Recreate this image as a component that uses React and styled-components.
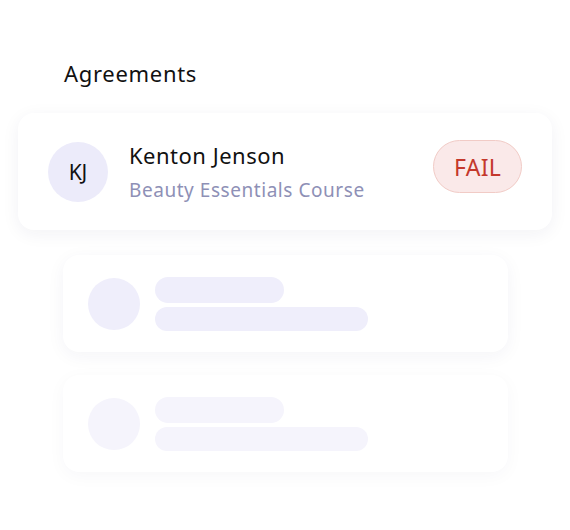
import React from 'react';
import styled, { createGlobalStyle } from 'styled-components';

const GlobalStyle = createGlobalStyle`
  body {
    margin: 0;
    background: #ffffff;
    font-family: 'Noto Sans', 'Open Sans', sans-serif;
  }
`;

const Page = styled.div`
  width: 570px;
  height: 530px;
  display: flex;
  flex-direction: column;
  align-items: center;
  padding-top: 57px;
  box-sizing: border-box;
`;

const Title = styled.h2`
  align-self: flex-start;
  margin: 0 0 24px 64px;
  font-size: 22px;
  font-weight: 400;
  letter-spacing: 0.7px;
  line-height: 32px;
  color: #111111;
`;

const Card = styled.div`
  display: flex;
  align-items: center;
  box-sizing: border-box;
  width: ${(p) => p.$width}px;
  height: ${(p) => p.$height}px;
  padding: 0 ${(p) => p.$pad}px;
  margin-bottom: ${(p) => p.$gap || 0}px;
  background: #ffffff;
  border-radius: 16px;
  box-shadow: 0 4px 18px rgba(40, 40, 90, ${(p) => p.$shadow});
`;

const Avatar = styled.div`
  flex: none;
  width: ${(p) => p.$size}px;
  height: ${(p) => p.$size}px;
  border-radius: 50%;
  background: ${(p) => p.$bg};
  display: flex;
  align-items: center;
  justify-content: center;
  font-size: 21px;
  color: #111111;
`;

const Info = styled.div`
  flex: 1;
  margin-left: 21px;
  display: flex;
  flex-direction: column;
  gap: 8px;
`;

const Name = styled.div`
  font-size: 22px;
  letter-spacing: 0.5px;
  line-height: 28px;
  color: #111111;
`;

const Course = styled.div`
  font-size: 19px;
  letter-spacing: 0.55px;
  line-height: 26px;
  color: #8e90b6;
`;

const Pill = styled.div`
  flex: none;
  align-self: flex-start;
  margin-top: 27px;
  width: 89px;
  height: 53px;
  box-sizing: border-box;
  border: 1.5px solid #f1cbc6;
  background: #fae9e9;
  border-radius: 27px;
  display: flex;
  align-items: center;
  justify-content: center;
  font-size: 23px;
  letter-spacing: 0.3px;
  color: #c4382c;
`;

const Lines = styled.div`
  margin-left: 15px;
  display: flex;
  flex-direction: column;
  gap: 4px;
`;

const Bar = styled.div`
  width: ${(p) => p.$w}px;
  height: ${(p) => p.$h}px;
  border-radius: 13px;
  background: ${(p) => p.$bg};
`;

const Skeleton = ({ tone, shadow, gap }) => (
  <Card $width={445} $height={97} $pad={25} $shadow={shadow} $gap={gap}>
    <Avatar $size={52} $bg={tone} />
    <Lines>
      <Bar $w={129} $h={26} $bg={tone} />
      <Bar $w={213} $h={24} $bg={tone} />
    </Lines>
  </Card>
);

export default function App() {
  return (
    <>
      <GlobalStyle />
      <Page>
        <Title>Agreements</Title>
        <Card $width={534} $height={117} $pad={30} $shadow={0.06} $gap={25}>
          <Avatar $size={60} $bg="#ecebfa">KJ</Avatar>
          <Info>
            <Name>Kenton Jenson</Name>
            <Course>Beauty Essentials Course</Course>
          </Info>
          <Pill>FAIL</Pill>
        </Card>
        <Skeleton tone="#efeefb" shadow={0.05} gap={23} />
        <Skeleton tone="#f5f4fc" shadow={0.035} />
      </Page>
    </>
  );
}
